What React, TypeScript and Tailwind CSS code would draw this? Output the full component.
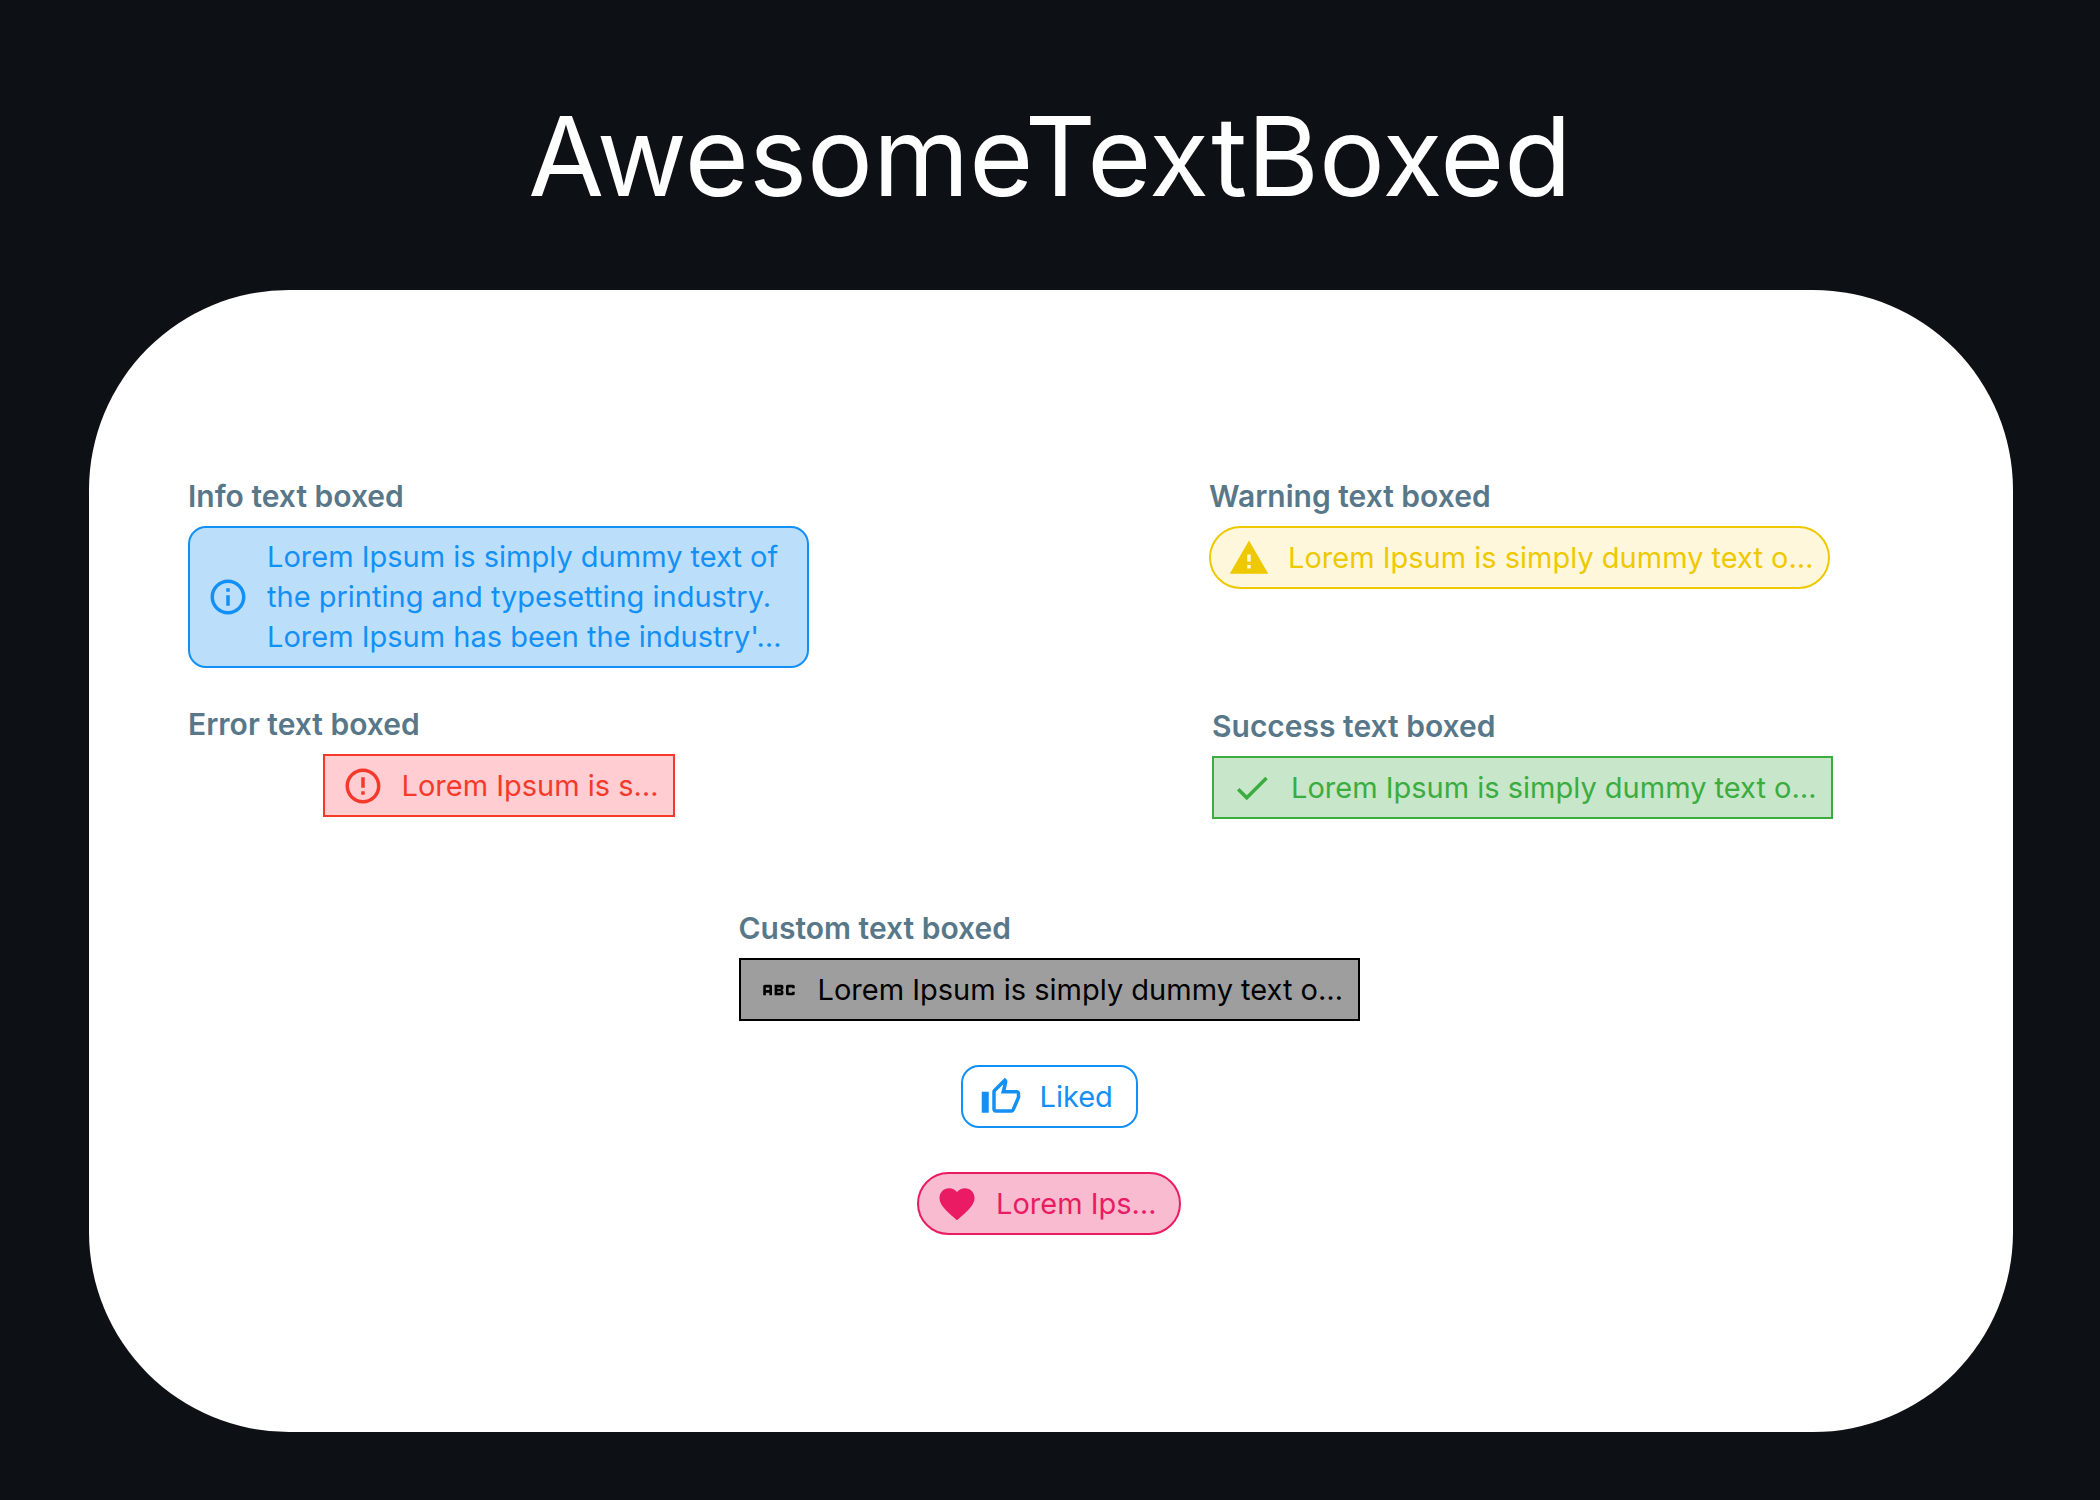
import type { ReactNode } from "react";
import {
  MdAbc,
  MdCheck,
  MdErrorOutline,
  MdFavorite,
  MdInfoOutline,
  MdOutlineThumbUp,
  MdWarning,
} from "react-icons/md";

type TextBoxedProps = {
  icon: ReactNode;
  className: string;
  children: ReactNode;
};

function TextBoxed({ icon, className, children }: TextBoxedProps) {
  return (
    <div
      className={`flex min-h-[63px] items-center gap-[18px] border-2 py-2 pl-[17px] text-[29px] leading-10 whitespace-nowrap ${className}`}
    >
      <span className="shrink-0 text-[42px]">{icon}</span>
      <p>{children}</p>
    </div>
  );
}

function Labeled({ label, children }: { label: string; children: ReactNode }) {
  return (
    <section className="flex w-[621px] flex-col gap-2.5">
      <h2 className="text-[30px] leading-10 font-semibold text-[#587889]">{label}</h2>
      {children}
    </section>
  );
}

export default function App() {
  return (
    <main className="flex min-h-screen flex-col bg-[#0d1014] pb-[68px] font-[Inter,sans-serif]">
      <h1 className="pt-[76px] pb-[54px] text-center text-[110px] leading-[160px] text-[#fdfefe]">
        AwesomeTextBoxed
      </h1>
      <div className="mr-[87px] ml-[89px] flex grow flex-col rounded-[200px] bg-white pt-[186px] pr-1">
        <div className="grid grid-cols-2">
          <div className="flex flex-col gap-9 pl-[99px]">
            <Labeled label="Info text boxed">
              <TextBoxed
                icon={<MdInfoOutline />}
                className="min-h-[142px] rounded-[18px] border-[#1390f5] bg-[#bbdefb] text-[#1390f5]"
              >
                Lorem Ipsum is simply dummy text of
                <br />
                the printing and typesetting industry.
                <br />
                Lorem Ipsum has been the industry'…
              </TextBoxed>
            </Labeled>
            <Labeled label="Error text boxed">
              <TextBoxed
                icon={<MdErrorOutline />}
                className="w-[352px] self-center border-[#f53a2c] bg-[#ffcdd2] text-[#f53a2c]"
              >
                Lorem Ipsum is s…
              </TextBoxed>
            </Labeled>
          </div>
          <div className="flex flex-col gap-[117px] pl-40">
            <Labeled label="Warning text boxed">
              <TextBoxed
                icon={<MdWarning />}
                className="rounded-full border-[#eec900] bg-[#fff7dc] text-[#eec900]"
              >
                Lorem Ipsum is simply dummy text o…
              </TextBoxed>
            </Labeled>
            <div className="pl-[3px]">
              <Labeled label="Success text boxed">
                <TextBoxed
                  icon={<MdCheck />}
                  className="border-[#3bac40] bg-[#c8e6c9] text-[#3bac40]"
                >
                  Lorem Ipsum is simply dummy text o…
                </TextBoxed>
              </Labeled>
            </div>
          </div>
        </div>
        <div className="flex flex-col items-center gap-11 pt-[89px]">
          <Labeled label="Custom text boxed">
            <TextBoxed icon={<MdAbc />} className="border-black bg-[#9e9e9e] text-black">
              Lorem Ipsum is simply dummy text o…
            </TextBoxed>
          </Labeled>
          <TextBoxed
            icon={<MdOutlineThumbUp />}
            className="w-[177px] rounded-[18px] border-[#1390f5] bg-white text-[#1390f5]"
          >
            Liked
          </TextBoxed>
          <TextBoxed
            icon={<MdFavorite />}
            className="w-[264px] rounded-full border-[#ea1b63] bg-[#f8bbd0] text-[#ea1b63]"
          >
            Lorem Ips…
          </TextBoxed>
        </div>
      </div>
    </main>
  );
}
